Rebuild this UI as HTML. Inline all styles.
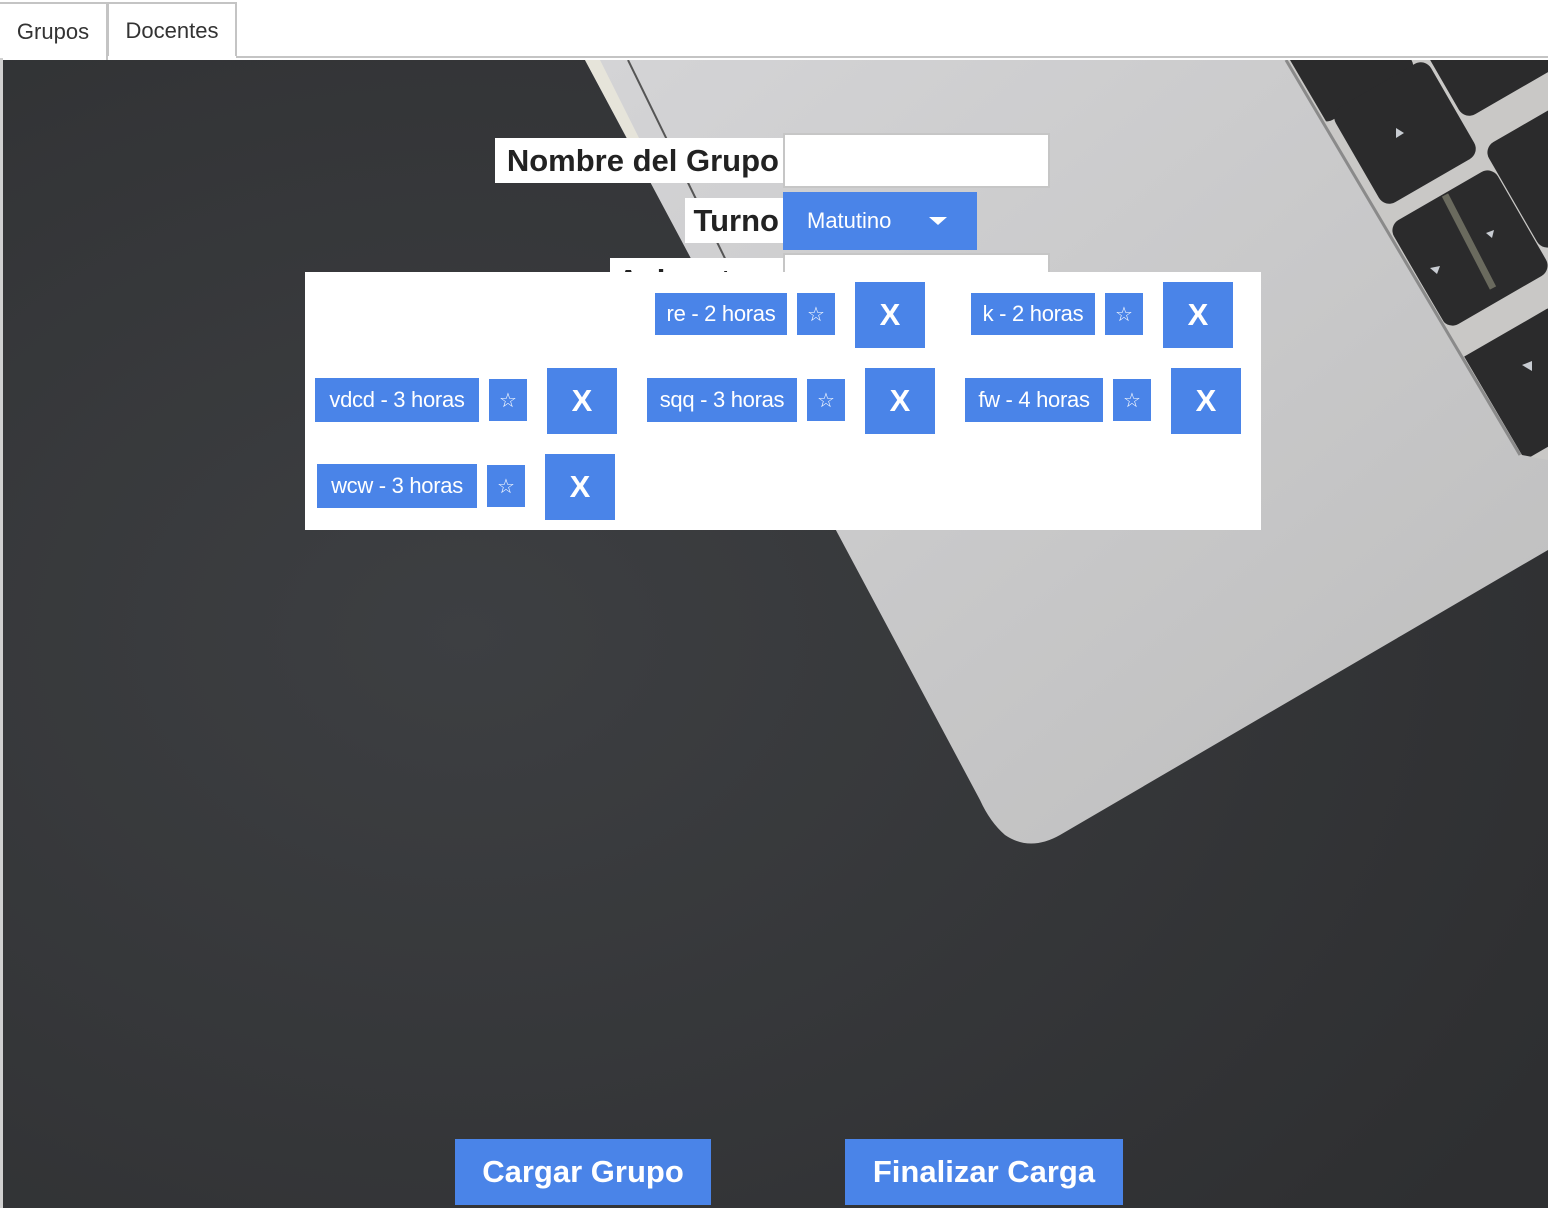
<!DOCTYPE html>
<html><head><meta charset="utf-8"><style>
*{margin:0;padding:0;box-sizing:border-box}
body{width:1548px;height:1208px;background:#fff;position:relative;overflow:hidden;font-family:"Liberation Sans",Arial,sans-serif}
.abs{position:absolute}
.tab{position:absolute;top:2px;height:56px;border:2px solid #c4c4c4;border-bottom:none;background:#fff;font-size:22px;color:#333;line-height:56px;text-align:center}
.lbl{position:absolute;background:#fff;font-weight:bold;font-size:31px;color:#222;text-align:right;padding-right:4px;overflow:hidden;white-space:nowrap}
.b{position:absolute;background:#4a84e8;color:#fff;display:flex;align-items:center;justify-content:center;white-space:nowrap}
.chip{font-size:22px;height:44px;letter-spacing:-0.3px}
.star{font-size:20px;width:38px;height:42px}
.x{font-size:31px;font-weight:bold;width:70px;height:66px}
</style></head><body>
<div class="tab" style="left:0;width:108px;border-left:none;height:58px">Grupos</div>
<div class="tab" style="left:107px;width:130px;height:54px;line-height:54px">Docentes</div>
<div class="abs" style="left:236px;top:56px;width:1312px;height:2px;background:#c4c4c4"></div>
<div class="abs" style="left:0;top:58px;width:3px;height:1150px;background:#d0d0d0"></div>
<svg class="abs" style="left:3px;top:60px" width="1545" height="1148" viewBox="3 60 1545 1148">
<defs>
<radialGradient id="bg" cx="0.3" cy="0.5" r="0.8"><stop offset="0" stop-color="#3d3f42"/><stop offset="1" stop-color="#2e2f31"/></radialGradient>
<linearGradient id="lp" x1="0" y1="0" x2="1" y2="1"><stop offset="0" stop-color="#d4d4d6"/><stop offset="1" stop-color="#bdbdbd"/></linearGradient>
<clipPath id="well"><path d="M1290 60 L1548 60 L1548 460 L1522 455 Z"/></clipPath>
</defs>
<rect x="3" y="60" width="1545" height="1148" fill="url(#bg)"/>
<path d="M585 60 L1548 60 L1548 550 L1060 835 Q1030 852 1005 835 Q990 822 980 800 Z" fill="url(#lp)"/>
<path d="M585 60 L600 60 L640 140 L628 140 Z" fill="#e6e4da"/>
<path d="M628 60 L760 330" stroke="#555" stroke-width="2"/>
<path d="M1286 60 L1548 60 L1548 460 L1520 455 Z" fill="#c9c8c6"/>
<g fill="#2b2b2c" clip-path="url(#well)">
<rect x="-55" y="-50" width="110" height="100" rx="12" transform="translate(1345 55) rotate(-30)"/>
<rect x="-55" y="-55" width="110" height="110" rx="12" transform="translate(1405 133) rotate(-30)"/>
<rect x="-60" y="-60" width="120" height="120" rx="12" transform="translate(1470 248) rotate(-30)"/>
<rect x="-60" y="-60" width="120" height="120" rx="12" transform="translate(1535 385) rotate(-30)"/>
<rect x="-55" y="-55" width="110" height="110" rx="12" transform="translate(1485 45) rotate(-30)"/>
<rect x="-60" y="-60" width="120" height="120" rx="12" transform="translate(1565 170) rotate(-30)"/>
</g>
<path d="M1286 60 L1520 455" stroke="#8a8a8a" stroke-width="3"/>
<path d="M1445 195 L1493 288" stroke="#6a6a5e" stroke-width="7"/>
<g fill="#c8ccd2">
<path d="M1396 128 l8 5 -8 5z"/><path d="M1486 233 l8 -3 -2 8z"/><path d="M1430 268 l10 -2 -3 8z"/><path d="M1522 365 l10 -4 0 10z"/>
</g>
</svg>
<div class="lbl" style="left:495px;top:138px;width:288px;height:45px;line-height:45px">Nombre del Grupo</div>
<div class="abs" style="left:783px;top:133px;width:267px;height:55px;background:#fff;border:2px solid #c6c6c6"></div>
<div class="lbl" style="left:685px;top:198px;width:98px;height:45px;line-height:45px">Turno</div>
<div class="b" style="left:783px;top:192px;width:194px;height:58px;justify-content:flex-start;padding-left:24px;font-size:22px">Matutino<span style="margin-left:38px;width:0;height:0;border-left:9px solid transparent;border-right:9px solid transparent;border-top:8px solid #fff"></span></div>
<div class="lbl" style="left:610px;top:258px;width:173px;height:14px;line-height:45px">Asignatura</div>
<div class="abs" style="left:783px;top:253px;width:267px;height:25px;background:#fff;border:2px solid #c6c6c6;border-bottom:none"></div>
<div class="abs" style="left:305px;top:272px;width:956px;height:258px;background:#fff"></div>

<div class="b chip" style="left:655px;top:293px;width:132px;height:42px">re - 2 horas</div>
<div class="b star" style="left:797px;top:293px">☆</div>
<div class="b x" style="left:855px;top:282px">X</div>
<div class="b chip" style="left:971px;top:293px;width:124px;height:42px">k - 2 horas</div>
<div class="b star" style="left:1105px;top:293px">☆</div>
<div class="b x" style="left:1163px;top:282px">X</div>

<div class="b chip" style="left:315px;top:378px;width:164px">vdcd - 3 horas</div>
<div class="b star" style="left:489px;top:379px">☆</div>
<div class="b x" style="left:547px;top:368px">X</div>
<div class="b chip" style="left:647px;top:378px;width:150px">sqq - 3 horas</div>
<div class="b star" style="left:807px;top:379px">☆</div>
<div class="b x" style="left:865px;top:368px">X</div>
<div class="b chip" style="left:965px;top:378px;width:138px">fw - 4 horas</div>
<div class="b star" style="left:1113px;top:379px">☆</div>
<div class="b x" style="left:1171px;top:368px">X</div>

<div class="b chip" style="left:317px;top:464px;width:160px">wcw - 3 horas</div>
<div class="b star" style="left:487px;top:465px">☆</div>
<div class="b x" style="left:545px;top:454px">X</div>

<div class="b" style="left:455px;top:1139px;width:256px;height:66px;font-size:31px;font-weight:bold">Cargar Grupo</div>
<div class="b" style="left:845px;top:1139px;width:278px;height:66px;font-size:31px;font-weight:bold">Finalizar Carga</div>
</body></html>
